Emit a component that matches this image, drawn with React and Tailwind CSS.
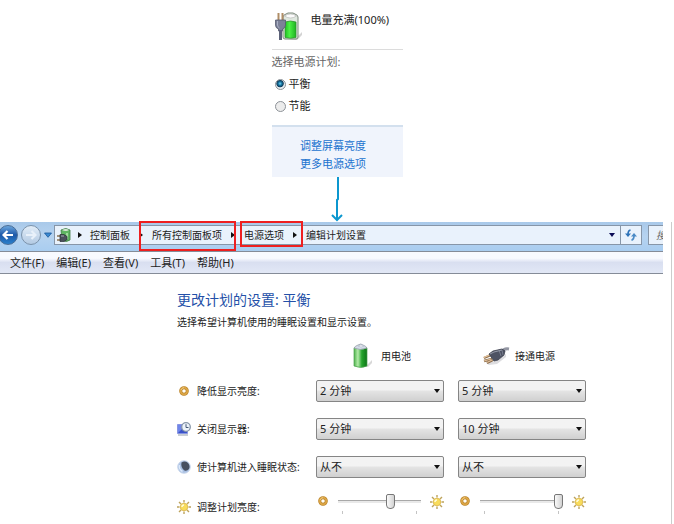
import { useState } from "react";

const menus = ["文件(F)", "编辑(E)", "查看(V)", "工具(T)", "帮助(H)"];

const timeouts = ["1 分钟", "2 分钟", "3 分钟", "5 分钟", "10 分钟", "15 分钟", "从不"];

const rows = [
  { id: "dim", label: "降低显示亮度:", icon: RingIcon, battery: "2 分钟", plugged: "5 分钟" },
  { id: "off", label: "关闭显示器:", icon: MonitorIcon, battery: "5 分钟", plugged: "10 分钟" },
  { id: "sleep", label: "使计算机进入睡眠状态:", icon: MoonIcon, battery: "从不", plugged: "从不" },
];

function ChargingIcon() {
  return (
    <svg width="28" height="30" viewBox="0 0 28 30" aria-hidden="true">
      <defs>
        <linearGradient id="chg" x1="0" x2="1">
          <stop offset="0" stopColor="#1fc022" />
          <stop offset="0.4" stopColor="#4cf046" />
          <stop offset="1" stopColor="#1fb322" />
        </linearGradient>
      </defs>
      <path d="M20 27 27 20v3l-5 5H12z" fill="#d4d4d4" />
      <path d="M8 5q0-2 3-3l2-1h5l2 1q3 1 3 3v20q0 2-2 2H10q-2 0-2-2z" fill="#dfe8df" stroke="#7d897d" />
      <path d="M9.500 4q6-4 12 0-6 4-12 0" fill="#fbfbfb" stroke="#b0b0b0" strokeWidth="0.6" />
      <path d="M10 10q5.500-2 11 0v15.500q-5 1.500-11 0z" fill="url(#chg)" stroke="#2f8d2f" strokeWidth="0.7" />
      <path d="M3.500 1v8M7.500 1v8" stroke="#b08d66" strokeWidth="2" />
      <path d="M0.500 8h10v5q0 3-3 4v2H3.500v-2q-3-1-3-4z" fill="#7c8198" stroke="#555b70" strokeWidth="0.8" />
      <path d="M2.500 9v4q0 2 2 3" stroke="#aab0c4" fill="none" />
      <path d="M5.500 18v10" stroke="#5c6178" strokeWidth="3" />
    </svg>
  );
}

function BatteryIcon() {
  return (
    <svg width="20" height="26" viewBox="0 0 20 26" aria-hidden="true">
      <defs>
        <linearGradient id="bat" x1="0" x2="1">
          <stop offset="0" stopColor="#4fb34c" />
          <stop offset="0.3" stopColor="#b4eba9" />
          <stop offset="0.6" stopColor="#25a42c" />
          <stop offset="1" stopColor="#0d7517" />
        </linearGradient>
      </defs>
      <path d="M13 23 19 17v3l-4 4H8z" fill="#d8d8d8" />
      <path d="M1 5q7-3 13 0v18q-6 3-13 0z" fill="url(#bat)" stroke="#4ba04d" strokeWidth="0.7" />
      <path d="M1 5q1-2 4-3 3-2 5 0 3 1 4 3-7 3-13 0" fill="#d3dbe8" stroke="#8e979f" strokeWidth="0.7" />
      <path d="M5 3q3-2 6 0-3 2-6 0" fill="#fff" stroke="#aab4c4" strokeWidth="0.6" />
    </svg>
  );
}

function PlugIcon() {
  return (
    <svg width="28" height="18" viewBox="0 0 28 18" aria-hidden="true">
      <path d="M4 16 14 14l10-7v3l-9 7-8 1z" fill="#dddde0" />
      <path d="M20 5q2-4 7-3" stroke="#9396a3" strokeWidth="3" fill="none" />
      <path d="m2 11 7-3M2 14l8-2M5 16l6-3" stroke="#8a6b4b" strokeWidth="2.400" />
      <path d="m1.500 10.700 7-3M2 14l7-2M5 15.500l6-3" stroke="#e0c09a" strokeWidth="1.300" />
      <path d="m7 7 4-3 9-2 3 2-1 4-6 5-4 1z" fill="#4d5263" stroke="#3a3d4b" strokeWidth="0.8" />
      <path d="m8 7 4-2 8-2" stroke="#969baa" fill="none" />
      <path d="m17 3 2 6M20 3l1 5" stroke="#8b90a0" strokeWidth="0.7" />
    </svg>
  );
}

function RingIcon() {
  return (
    <svg width="10" height="10" viewBox="0 0 10 10" aria-hidden="true">
      <circle cx="5" cy="5" r="3.300" fill="#fffdf6" stroke="#b98228" strokeWidth="3" />
      <circle cx="5" cy="5" r="3.300" fill="none" stroke="#dba545" strokeWidth="1.800" />
      <path d="M2 4q1-2 3-2.500" stroke="#f3d28d" strokeWidth="0.8" fill="none" />
    </svg>
  );
}

function MonitorIcon() {
  return (
    <svg width="14" height="14" viewBox="0 0 14 14" aria-hidden="true">
      <path d="M0.500 2.500h10v9h-10z" fill="#6f86ea" stroke="#8795e2" />
      <path d="m1 11 8-8 1 8z" fill="#3a52c8" />
      <path d="M1 13h10" stroke="#a4acb8" strokeWidth="1.200" />
      <circle cx="9" cy="5" r="4.300" fill="#edf3fa" stroke="#8796a8" strokeWidth="1.300" />
      <path d="M9 2.200v3.300h2.500" fill="none" stroke="#465a76" />
    </svg>
  );
}

function MoonIcon() {
  return (
    <svg width="14" height="14" viewBox="0 0 14 14" aria-hidden="true">
      <circle cx="7" cy="7" r="6.300" fill="#a9c0e3" stroke="#cbd8ec" />
      <path d="M4.500 2.500Q8 0.500 11 3q2.500 3 1 6-2 2.500-4.500 1.500-4-3-3-8" fill="#475060" />
      <path d="M2.500 5q-1 4 3 6.500" stroke="#dce9fa" fill="none" strokeWidth="1.500" />
    </svg>
  );
}

function SunIcon() {
  return (
    <svg width="14" height="14" viewBox="0 0 14 14" aria-hidden="true">
      <path
        d="M7 0v2.500M7 11.500V14M0 7h2.500M11.500 7H14M2 2l2 2M10 10l2 2M12 2l-2 2M4 10l-2 2"
        stroke="#bda35c"
        strokeWidth="1.400"
      />
      <circle cx="7" cy="7" r="3.800" fill="#f8dc5c" stroke="#d9b344" strokeWidth="0.8" />
      <path d="M5 7q0-2 2-2" stroke="#fffbd8" strokeWidth="1.500" fill="none" />
    </svg>
  );
}

function PanelIcon() {
  return (
    <svg width="15" height="15" viewBox="0 0 15 15" aria-hidden="true">
      <path d="M4 2q5-3 9 0v10q-4 3-8 0z" fill="#5fb562" stroke="#3f7a45" strokeWidth="0.8" />
      <path d="M5 2q4-2 7 0-3 2-7 0" fill="#dbe7d8" />
      <path d="M10 5v6" stroke="#b5e6b0" strokeWidth="1.500" />
      <path d="M0 8h3M0 12h3" stroke="#8b7352" strokeWidth="1.300" />
      <path d="M3 6.500h4l3 2v3l-3 2H3z" fill="#4a505b" stroke="#292e37" strokeWidth="0.7" />
      <path d="M4 8h3" stroke="#a1a8b5" />
    </svg>
  );
}

function NavArrow({ flip }) {
  return (
    <svg width="12" height="12" viewBox="0 0 12 12" aria-hidden="true">
      <path
        d={flip ? "M1 6h9M6.500 2l4 4-4 4" : "M11 6H2M5.500 2l-4 4 4 4"}
        fill="none"
        stroke="currentColor"
        strokeWidth="2.200"
      />
    </svg>
  );
}

function Crumb({ children, marked, arrow = true }) {
  return (
    <li className="relative flex items-center">
      <button type="button" className="leading-4 whitespace-nowrap">{children}</button>
      {arrow && (
        <svg width="4" height="6" viewBox="0 0 4 6" className="mx-[9px]" aria-hidden="true">
          <path d="M0 0l4 3-4 3z" fill="#111" />
        </svg>
      )}
      {marked && <span className={`absolute pointer-events-none border-2 border-[#ee2020] ${marked}`} />}
    </li>
  );
}

function PowerPopup() {
  const [plan, setPlan] = useState("balanced");
  const radio =
    "appearance-none size-[11px] rounded-full border border-[#8d9298] bg-[#ececec] checked:bg-[radial-gradient(circle_at_45%_40%,#7bd3f3_0,#14739f_25%,#123c5a_45%,#e8eef2_56%)]";

  return (
    <section className="w-[131px] mx-auto pt-3 text-[11px] leading-4 text-[#222]">
      <div className="flex items-start h-9 pl-[3px] gap-2">
        <ChargingIcon />
        <p className="whitespace-nowrap">电量充满(100%)</p>
      </div>
      <div role="radiogroup" aria-labelledby="plans" className="border-t border-[#dcdcdc] mt-px pt-1 h-[76px]">
        <p id="plans" className="text-[#666]">选择电源计划:</p>
        <label className="flex items-center gap-[3px] pl-[3px] mt-1.5">
          <input type="radio" name="plan" className={radio} checked={plan === "balanced"} onChange={() => setPlan("balanced")} />
          平衡
        </label>
        <label className="flex items-center gap-[3px] pl-[3px] mt-1.5">
          <input type="radio" name="plan" className={radio} checked={plan === "saver"} onChange={() => setPlan("saver")} />
          节能
        </label>
      </div>
      <div className="flex flex-col items-center gap-0.5 h-[52px] pt-[11px] pr-2 border-t-2 border-[#d3e0ee] bg-[#f0f4fc] text-[#2273cf]">
        <a href="#brightness">调整屏幕亮度</a>
        <a href="#options">更多电源选项</a>
      </div>
    </section>
  );
}

function AddressBar() {
  return (
    <div className="flex items-start h-[29px] pt-[3px] bg-linear-to-b from-[#a9c9e9] via-[#b6d3f0] to-[#a9cdf0] text-[10px] text-[#222]">
      <button
        type="button"
        aria-label="后退"
        className="-ml-0.5 size-5 shrink-0 rounded-full border border-[#4a6d96] bg-linear-to-b from-[#6ba6dd] via-[#1c58a8] to-[#2b80cc] text-white flex items-center justify-center"
      >
        <NavArrow />
      </button>
      <button
        type="button"
        aria-label="前进"
        className="ml-[3px] size-5 shrink-0 rounded-full border border-[#7c93ab] bg-linear-to-b from-[#e2edf8] to-[#b3cae3] text-[#e9f1fa] flex items-center justify-center"
      >
        <NavArrow flip />
      </button>
      <button type="button" aria-label="最近的页面" className="w-[13px] h-5 shrink-0 flex items-center justify-center">
        <svg width="8" height="6" viewBox="0 0 8 6" aria-hidden="true">
          <path d="M0.500 1h7L4 5.300z" fill="#3b8bd2" stroke="#17569a" strokeWidth="0.8" />
        </svg>
      </button>
      <div className="flex flex-1 min-w-0 h-5 border border-[#8796a8] bg-[#e9f2fc]">
        <div className="flex items-center pl-0.5">
          <PanelIcon />
        </div>
        <ul className="flex flex-1 items-center">
          <li className="flex px-1.5 pr-2">
            <svg width="4" height="6" viewBox="0 0 4 6" aria-hidden="true">
              <path d="M0 0l4 3-4 3z" fill="#111" />
            </svg>
          </li>
          <Crumb>控制面板</Crumb>
          <Crumb marked="-left-[13px] right-2 -top-1.5 -bottom-2">所有控制面板项</Crumb>
          <Crumb marked="-left-1 right-[3px] -top-1.5 -bottom-1">电源选项</Crumb>
          <Crumb arrow={false}>编辑计划设置</Crumb>
        </ul>
        <button type="button" aria-label="以前的位置" className="w-4 flex items-center justify-center">
          <svg width="6" height="4" viewBox="0 0 6 4" aria-hidden="true">
            <path d="M0 0h6L3 4z" fill="#0b0b55" />
          </svg>
        </button>
        <button type="button" aria-label="刷新" className="w-[21px] border-l border-[#8796a8] flex items-center justify-center">
          <svg width="12" height="12" viewBox="0 0 12 12" aria-hidden="true">
            <path d="M5.500 1Q3 1.500 3 5" fill="none" stroke="#2d72b8" strokeWidth="1.600" />
            <path d="M0 4.500h6L3 8z" fill="#2d72b8" />
            <path d="M6.500 11.300Q9 10.500 9 7" fill="none" stroke="#4a8ac6" strokeWidth="1.600" />
            <path d="M6 7.500h6L9 4z" fill="#4a8ac6" />
          </svg>
        </button>
      </div>
      <div className="ml-1.5 w-[15px] h-5 shrink-0 overflow-hidden border border-r-0 border-[#8796a8] bg-[#e9f2fc]">
        <input
          aria-label="搜索"
          placeholder="搜索控制面板"
          className="w-24 pl-[7px] h-[18px] text-[10px] italic placeholder:text-[#666] outline-none"
        />
      </div>
    </div>
  );
}

function TimeoutSelect({ id, label, value }) {
  return (
    <div className="relative">
      <select
        id={id}
        aria-label={label}
        defaultValue={value}
        className="block appearance-none w-full h-[22px] pl-[3px] pr-4 rounded-xs border border-[#858585] bg-linear-to-b from-[#f3f3f3] from-45% via-[#e4e4e4] via-50% to-[#d0d0d0] text-[11px] leading-4 text-[#222]"
      >
        {timeouts.map((t) => (
          <option key={t}>{t}</option>
        ))}
      </select>
      <svg width="6" height="4" viewBox="0 0 6 4" className="absolute right-1 top-[9px] pointer-events-none" aria-hidden="true">
        <path d="M0 0h6L3 4z" fill="#111" />
      </svg>
    </div>
  );
}

function BrightnessSlider({ label, value }) {
  return (
    <div className="flex items-start justify-between pl-0.5">
      <span className="pt-[3px]"><RingIcon /></span>
      <div className="w-[83px]">
        <input
          type="range"
          aria-label={label}
          defaultValue={value}
          className="block w-full h-4 appearance-none bg-transparent [&::-webkit-slider-runnable-track]:h-[3px] [&::-webkit-slider-runnable-track]:border-t [&::-webkit-slider-runnable-track]:border-[#a8a8a8] [&::-webkit-slider-runnable-track]:bg-[#e9e9e9] [&::-webkit-slider-thumb]:appearance-none [&::-webkit-slider-thumb]:w-[9px] [&::-webkit-slider-thumb]:h-[15px] [&::-webkit-slider-thumb]:-mt-[7px] [&::-webkit-slider-thumb]:rounded-t-[2px] [&::-webkit-slider-thumb]:rounded-b-[4px] [&::-webkit-slider-thumb]:border [&::-webkit-slider-thumb]:border-[#777] [&::-webkit-slider-thumb]:bg-linear-to-r [&::-webkit-slider-thumb]:from-[#fafafa] [&::-webkit-slider-thumb]:to-[#d2d2d2]"
        />
        <div className="flex justify-between px-1 pt-0.5">
          <i className="w-px h-[3px] bg-[#c4c4c4]" />
          <i className="w-px h-[3px] bg-[#c4c4c4]" />
        </div>
      </div>
      <span className="pt-0.5"><SunIcon /></span>
    </div>
  );
}

function PlanSettings() {
  const grid = "grid grid-cols-[125px_128px_128px] gap-x-[14px]";

  return (
    <main className="pl-[177px] pt-4 text-[10px] leading-4 text-[#222]">
      <h1 className="text-[14px] leading-5 text-[#2350a8]">更改计划的设置: 平衡</h1>
      <p className="mt-1">选择希望计算机使用的睡眠设置和显示设置。</p>
      <div className={`${grid} mt-2.5 h-8 items-center`}>
        <span />
        <div className="flex items-center gap-2 pl-[37px]">
          <BatteryIcon />
          用电池
        </div>
        <div className="flex items-center gap-[5px] pl-6">
          <PlugIcon />
          接通电源
        </div>
      </div>
      {rows.map(({ id, label, icon: Icon, battery, plugged }) => (
        <div key={id} className={`${grid} h-[38px] items-center`}>
          <label htmlFor={`${id}-battery`} className="flex items-center gap-1.5 whitespace-nowrap">
            <span className="w-[14px] flex justify-center"><Icon /></span>
            {label}
          </label>
          <TimeoutSelect id={`${id}-battery`} value={battery} />
          <TimeoutSelect id={`${id}-plugged`} label={`${label} 接通电源`} value={plugged} />
        </div>
      ))}
      <div className={`${grid} pt-[7px]`}>
        <div className="flex items-center gap-1.5 pt-1.5">
          <SunIcon />
          调整计划亮度:
        </div>
        <BrightnessSlider label="用电池亮度" value={66} />
        <BrightnessSlider label="接通电源亮度" value={100} />
      </div>
    </main>
  );
}

export default function App() {
  return (
    <div className="min-h-screen flex flex-col bg-white font-['Noto_Sans','Noto_Sans_CJK_SC',sans-serif]">
      <PowerPopup />
      <svg width="14" height="45" viewBox="0 0 14 45" className="block mx-auto" aria-hidden="true">
        <path d="M8 0v22l-1 1v20M2 38l5 5 5-5" fill="none" stroke="#0c97cf" strokeWidth="2" />
      </svg>
      <div className="flex-1 mr-0.5 pr-2 border-r border-[#ccc]">
        <AddressBar />
        <nav className="flex items-center h-[23px] pl-2.5 gap-3 border-y border-[#858c98] bg-linear-to-b from-[#f8faff] from-30% via-[#d9dff0] via-50% to-[#e2e8f6] text-[11px] leading-4 text-[#222]">
          {menus.map((label) => (
            <button key={label} type="button">{label}</button>
          ))}
        </nav>
        <PlanSettings />
      </div>
    </div>
  );
}
